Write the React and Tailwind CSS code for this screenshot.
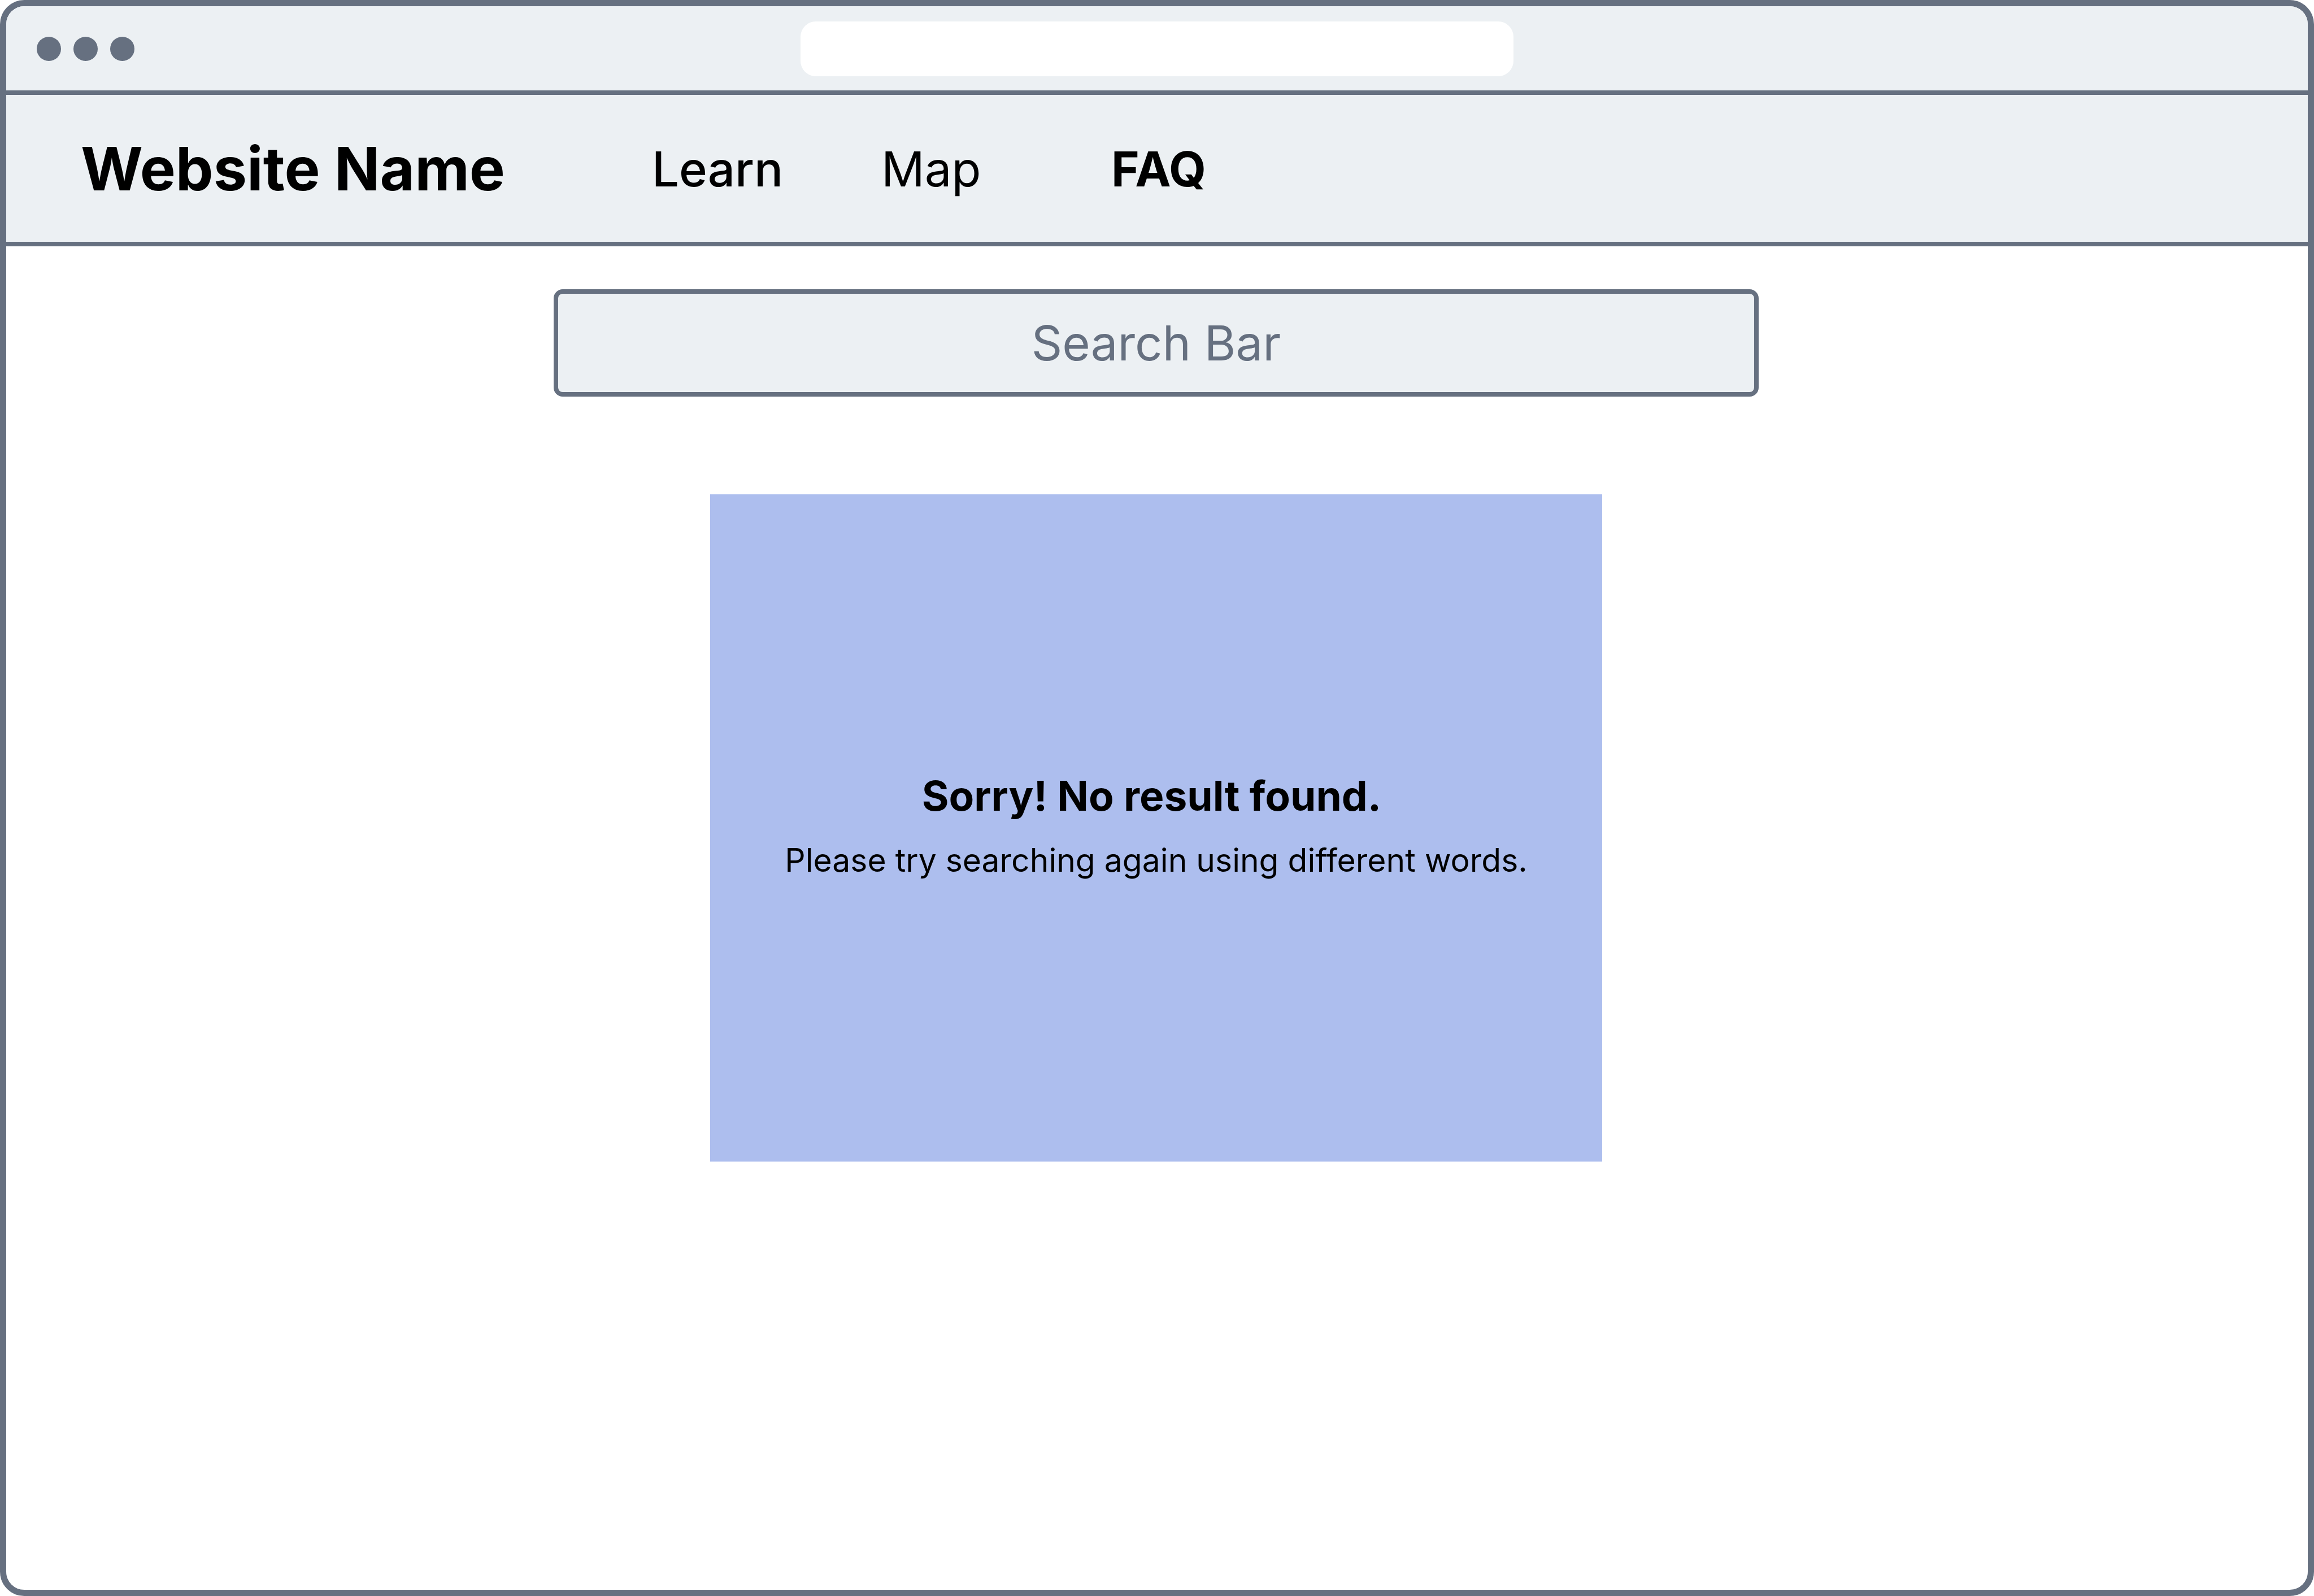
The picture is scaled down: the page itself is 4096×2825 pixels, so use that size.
const links = [
  { label: "Learn", className: "w-[406px] font-medium" },
  { label: "Map", className: "w-[407px] font-normal" },
  { label: "FAQ", className: "font-bold" },
];

function BrowserBar() {
  return (
    <div className="grid h-[157px] shrink-0 grid-cols-[1fr_31%_1fr] items-center border-b-8 border-[#667080] bg-[#ecf0f3] pt-[2px]">
      <div className="flex gap-[22px] pl-[54px]">
        <span className="size-[43px] rounded-full bg-[#667080]" />
        <span className="size-[43px] rounded-full bg-[#667080]" />
        <span className="size-[43px] rounded-full bg-[#667080]" />
      </div>
      <input
        type="text"
        aria-label="Address"
        className="h-[97px] w-full rounded-[27px] bg-white px-8 text-5xl outline-none"
      />
    </div>
  );
}

function SiteHeader() {
  return (
    <header className="flex h-[268px] shrink-0 items-center border-b-8 border-[#667080] bg-[#ecf0f3] pt-[2px] pl-[132px]">
      <a href="#home" className="w-[1011px] text-[106px] leading-none font-bold whitespace-nowrap">
        Website Name
      </a>
      <nav className="flex text-[85px] leading-none">
        {links.map((link) => (
          <a key={link.label} href={"#" + link.label.toLowerCase()} className={link.className}>
            {link.label}
          </a>
        ))}
      </nav>
    </header>
  );
}

export default function App() {
  return (
    <div className="flex min-h-screen flex-col overflow-hidden rounded-[43px] border-[11px] border-[#667080] bg-white font-['Inter',sans-serif] text-black">
      <BrowserBar />
      <SiteHeader />
      <main className="flex flex-1 flex-col items-center pt-[76px] pr-[3px]">
        <input
          type="text"
          aria-label="Search"
          placeholder="Search Bar"
          className="h-[190px] w-[52.4%] rounded-[16px] border-8 border-[#667080] bg-[#ecf0f3] text-center text-[85px] font-normal text-[#667080] outline-none placeholder:text-[#667080] placeholder:opacity-100"
        />
        <section className="mt-[173px] flex min-h-[1181px] w-[38.8%] flex-col items-center justify-center bg-[#adbeee] text-center">
          <h1 className="pr-4 text-[73px] leading-[114px] font-bold">Sorry! No result found.</h1>
          <p className="text-[57px] leading-[114px] font-normal">
            Please try searching again using different words.
          </p>
        </section>
      </main>
    </div>
  );
}
